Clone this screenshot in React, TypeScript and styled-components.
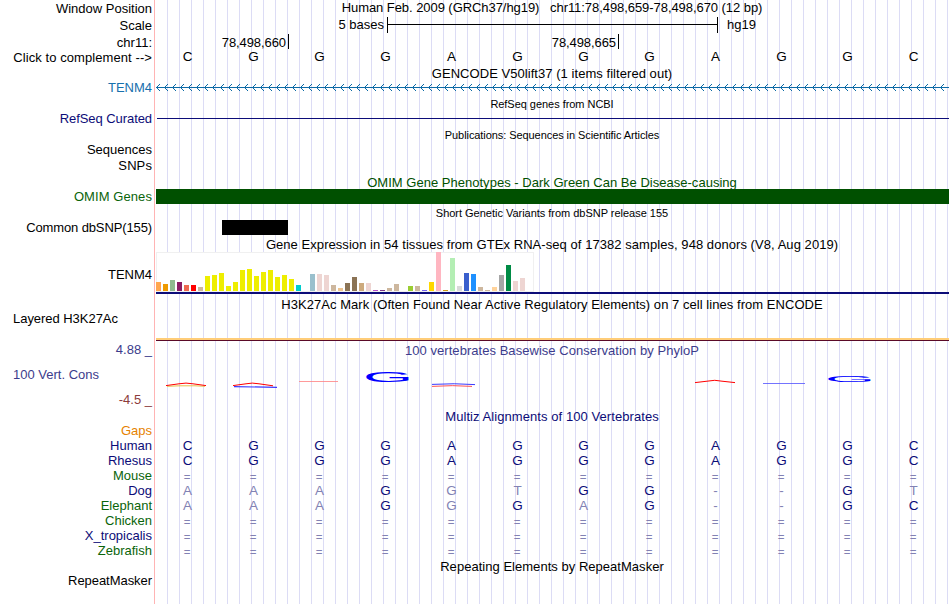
import React from 'react'
import styled, { createGlobalStyle } from 'styled-components';

interface IBar {
    height: number;
    color: string;
}

const NAVY = '#0c0c78';
const GREEN = '#0a640a';
const BLACK = '#000';

const sequence = 'CGGGAGGGAGGC'.split('');

const tissues: [number, string][] = [
    [9, '#ffa54f'], [7, '#ee9a00'], [11, '#8fbc8f'], [9, '#8b1c62'], [6, '#ee6a50'], [6, '#ff0000'],
    [4, '#cdb79e'], [15, '#eeee00'], [16, '#eeee00'], [18, '#eeee00'], [5, '#eeee00'], [9, '#eeee00'],
    [21, '#eeee00'], [22, '#eeee00'], [15, '#eeee00'], [19, '#eeee00'], [21, '#eeee00'], [14, '#eeee00'],
    [16, '#eeee00'], [12, '#eeee00'], [6, '#00cdcd'], [0, '#ee82ee'], [17, '#9ac0cd'], [17, '#eed5d2'],
    [16, '#eed5d2'], [6, '#cdb79e'], [3, '#eec591'], [8, '#8b7355'], [14, '#8b7355'], [8, '#cdaa7d'],
    [8, '#eed5d2'], [1, '#b452cd'], [1, '#7a378b'], [3, '#cdb79e'], [7, '#cdb79e'], [0, '#cdb79e'],
    [5, '#9acd32'], [5, '#cdb79e'], [1, '#7a67ee'], [9, '#ffd700'], [39, '#ffb6c1'], [1, '#cd9b1d'],
    [33, '#b4eeb4'], [5, '#d9d9d9'], [18, '#3a5fcd'], [17, '#1e90ff'], [4, '#cdb79e'], [1, '#cdb79e'],
    [4, '#ffd39b'], [16, '#a6a6a6'], [26, '#008b45'], [10, '#eed5d2'], [13, '#eed5d2'], [0, '#ff00ff'],
];

// lower case marks a base that differs from the human sequence
const species = [
    { name: 'Gaps', color: '#e68200', bases: '' },
    { name: 'Human', color: NAVY, bases: 'CGGGAGGGAGGC' },
    { name: 'Rhesus', color: NAVY, bases: 'CGGGAGGGAGGC' },
    { name: 'Mouse', color: GREEN, bases: '============' },
    { name: 'Dog', color: NAVY, bases: 'aaaGgtGG--Gt' },
    { name: 'Elephant', color: GREEN, bases: 'aaaGgGaG--GC' },
    { name: 'Chicken', color: GREEN, bases: '============' },
    { name: 'X_tropicalis', color: NAVY, bases: '============' },
    { name: 'Zebrafish', color: GREEN, bases: '============' },
];

const IntronLine = () => (
    <Drawing width="794" height="15" shapeRendering="crispEdges">
        <defs>
            <pattern id="strand" x="1" width="8" height="15" patternUnits="userSpaceOnUse">
                <path d="M0 7h1v1h-1zM1 6h1v1h-1zM2 5h1v1h-1zM3 4h1v1h-1zM1 8h1v1h-1zM2 9h1v1h-1zM3 10h1v1h-1z" fill="#0c6aa6" />
            </pattern>
        </defs>
        <rect x="1" y="7" width="793" height="1" fill="#0c6aa6" />
        <rect x="1" width="788" height="15" fill="url(#strand)" />
    </Drawing>
);

const ConservationLogo = () => (
    <Drawing width="794" height="48" fill="none">
        <path d="M12 28.3 L25 27.8 H40 L50 28.3" stroke="#e6c04a" />
        <path d="M11 27.6 L24 25.8 Q31 24.4 38 25.8 L51 27.6" stroke="#ff0000" />
        <path d="M79 28.6 L122 29.4" stroke="#3c3cff" strokeWidth="1.2" />
        <path d="M78 27.6 L91 25.8 Q97 24.4 104 25.8 L118 27.8" stroke="#ff0000" />
        <path d="M144 23.5H183" stroke="#ff8080" strokeWidth="0.8" />
        <LogoBase transform="translate(208 23.8) scale(4.6 1)">G</LogoBase>
        <path d="M277 26.4 Q300 25 320 26.6" stroke="#3c3cff" />
        <path d="M277 28.4 Q298 26.9 317 28.4" stroke="#ff4040" strokeWidth="0.9" />
        <path d="M540 24.6 L552 23.2 Q560 21.4 567 23.2 L580 24.6" stroke="#ff0000" />
        <path d="M608 25.5H650" stroke="#5050ff" strokeWidth="0.8" />
        <LogoBase transform="translate(670 23.9) scale(4.6 0.6)">G</LogoBase>
    </Drawing>
);

const Bases = ({ bases }: { bases: string[] }) => (
    <BaseGrid>
        {bases.map((base, i) => {
            if (base === '=') return <Unaligned key={i}>=</Unaligned>;
            return <Base key={i} $mismatch={/[a-z-]/.test(base)}>{base.toUpperCase()}</Base>;
        })}
    </BaseGrid>
);

const Bar = ({ height, color }: IBar) => <TissueBar style={{ height, background: color }} />;

const App = () => {
    return (
        <>
            <GlobalStyle />
            <Browser>
                <Row $height={17}>
                    <Label $top={1}>Window Position</Label>
                    <Track>
                        <Title $spacing={-0.06}>Human Feb. 2009 (GRCh37/hg19)&nbsp;&nbsp; chr11:78,498,659-78,498,670 (12 bp)</Title>
                    </Track>
                </Row>
                <Row $height={16}>
                    <Label $top={1}>Scale</Label>
                    <Track>
                        <Ruler>
                            <RulerText>5 bases</RulerText>
                            <ScaleBar />
                            <span>hg19</span>
                        </Ruler>
                    </Track>
                </Row>
                <Row $height={16}>
                    <Label $top={2}>chr11:</Label>
                    <Track>
                        <Positions>
                            <Position $width={134}>78,498,660</Position>
                            <Position $width={330}>78,498,665</Position>
                        </Positions>
                    </Track>
                </Row>
                <Row $height={17}>
                    <Label $top={1} $spacing={0.08}>Click to complement --&gt;</Label>
                    <Track>
                        <SequenceBases><Bases bases={sequence} /></SequenceBases>
                    </Track>
                </Row>

                <Title $spacing={0.05}>GENCODE V50lift37 (1 items filtered out)</Title>
                <Row $height={15}>
                    <Label $top={-1} $color="#1770ad">TENM4</Label>
                    <Track $top={-1}><IntronLine /></Track>
                </Row>
                <SmallTitle $spacing={-0.04}>RefSeq genes from NCBI</SmallTitle>
                <Row $height={16}>
                    <Label $color={NAVY} $spacing={-0.07}>RefSeq Curated</Label>
                    <Track><GeneLine /></Track>
                </Row>
                <SmallTitle $spacing={-0.07}>Publications: Sequences in Scientific Articles</SmallTitle>
                <Row $height={16}><Label>Sequences</Label></Row>
                <Row $height={17}><Label $spacing={0.1}>SNPs</Label></Row>

                <Title $color="#005000" $spacing={0.02}>OMIM Gene Phenotypes - Dark Green Can Be Disease-causing</Title>
                <Row $height={15}>
                    <Label $top={-1} $color={GREEN} $spacing={0.08}>OMIM Genes</Label>
                    <Track $top={-1}><Block $left={1} $width={793} $color="#005000" /></Track>
                </Row>
                <SmallTitle $spacing={-0.02}>Short Genetic Variants from dbSNP release 155</SmallTitle>
                <Row $height={17}>
                    <Label $spacing={-0.12}>Common dbSNP(155)</Label>
                    <Track><Block $left={67} $width={66} $color={BLACK} /></Track>
                </Row>

                <Title $spacing={0.055}>Gene Expression in 54 tissues from GTEx RNA-seq of 17382 samples, 948 donors (V8, Aug 2019)</Title>
                <Row $height={45}>
                    <Label $top={15}>TENM4</Label>
                    <Track>
                        <Expression>
                            {tissues.map(([height, color], i) => <Bar key={i} height={height} color={color} />)}
                        </Expression>
                        <ExpressionBase />
                    </Track>
                </Row>

                <Title $spacing={0.045}>H3K27Ac Mark (Often Found Near Active Regulatory Elements) on 7 cell lines from ENCODE</Title>
                <Row $height={31}>
                    <LeftLabel $top={-1} $spacing={-0.04}>Layered H3K27Ac</LeftLabel>
                    <Track $top={26}><HistoneLine /></Track>
                </Row>

                <Row $height={66}>
                    <ConsLabels>
                        <Label $color="#3c3c8c">4.88 _</Label>
                        <LeftLabel $color="#3c3c8c">100 Vert. Cons</LeftLabel>
                        <Label $color="#8c3c3c">-4.5 _</Label>
                    </ConsLabels>
                    <Track>
                        <Title $color="#3c3c8c" $spacing={0.04}>100 vertebrates Basewise Conservation by PhyloP</Title>
                        <ConservationLogo />
                    </Track>
                </Row>

                <Title $color={NAVY} $spacing={0.07}>Multiz Alignments of 100 Vertebrates</Title>
                {species.map(({ name, color, bases }) => (
                    <Row key={name} $height={15}>
                        <Label $top={-1} $color={color}>{name}</Label>
                        <Track $top={-1}><Bases bases={bases.split('')} /></Track>
                    </Row>
                ))}
                <Title $spacing={0.03}>Repeating Elements by RepeatMasker</Title>
                <Row $height={16}><Label $top={-1} $spacing={-0.05}>RepeatMasker</Label></Row>
            </Browser>
        </>
    );
}

const GlobalStyle = createGlobalStyle`
    body {
        margin: 0;
        background: #fff;
        overflow: hidden;
    }
`;

const Browser = styled("main")`
    box-sizing: border-box;
    display: flex;
    flex-direction: column;
    width: 949px;
    height: 604px;
    font-family: "Liberation Sans", Arial, sans-serif;
    font-size: 13px;
    line-height: 15px;
    color: #000;
    white-space: nowrap;
    background:
        linear-gradient(#ffb4b4, #ffb4b4) 154px 0 / 1px 100% no-repeat,
        repeating-linear-gradient(to right, #dcdcf5 0 1px, transparent 1px 12px) 167px 0 / 782px 100% no-repeat;
`;

const Row = styled("section")<{ $height: number }>`
    display: flex;
    flex: none;
    height: ${({ $height }) => $height}px;
`;

const Label = styled("div")<{ $top?: number; $color?: string; $spacing?: number }>`
    flex: none;
    width: 152px;
    height: 15px;
    margin-top: ${({ $top = 0 }) => $top}px;
    margin-right: 3px;
    text-align: right;
    letter-spacing: ${({ $spacing = 0 }) => $spacing}px;
    color: ${({ $color = BLACK }) => $color};
`;

const LeftLabel = styled(Label)`
    box-sizing: border-box;
    padding-left: 13px;
    text-align: left;
`;

const ConsLabels = styled("div")`
    display: flex;
    flex-direction: column;
    justify-content: space-between;
    height: 65px;
    margin-top: -1px;
`;

const Track = styled("div")<{ $top?: number }>`
    flex: none;
    width: 794px;
    margin-top: ${({ $top = 0 }) => $top}px;
`;

const Title = styled("h2")<{ $color?: string; $spacing?: number }>`
    flex: none;
    height: 15px;
    margin: 0 0 0 155px;
    font-size: 13px;
    font-weight: normal;
    text-align: center;
    letter-spacing: ${({ $spacing = 0 }) => $spacing}px;
    color: ${({ $color = BLACK }) => $color};

    ${Track} > & {
        margin-left: 0;
    }
`;

const SmallTitle = styled(Title)`
    font-size: 11px;
    line-height: 17px;
`;

const Ruler = styled("div")`
    display: flex;
`;

const RulerText = styled("span")`
    width: 229px;
    margin-right: 3px;
    text-align: right;
`;

const ScaleBar = styled("div")`
    box-sizing: border-box;
    width: 331px;
    height: 16px;
    margin-right: 9px;
    border: solid #000;
    border-width: 0 1px;
    background: linear-gradient(#000, #000) 0 7px / 100% 1px no-repeat;
`;

const Positions = styled("div")`
    display: flex;
    padding-top: 1px;
`;

const Position = styled("div")<{ $width: number }>`
    box-sizing: border-box;
    width: ${({ $width }) => $width}px;
    height: 15px;
    padding: 1px 2px 0 0;
    border-right: 1px solid #000;
    text-align: right;
    letter-spacing: -0.08px;
`;

const BaseGrid = styled("div")`
    display: grid;
    grid-template-columns: repeat(12, 66px);
    color: ${NAVY};
`;

const SequenceBases = styled("div")`
    ${BaseGrid} {
        color: #000;
    }
`;

const Base = styled("span")<{ $mismatch?: boolean }>`
    box-sizing: border-box;
    height: 15px;
    font-size: 13.5px;
    line-height: 15px;
    text-align: center;
    text-indent: -1px;
    ${({ $mismatch }) => $mismatch && 'color: #8282b4;'}
`;

const Unaligned = styled(Base)`
    padding-top: 3px;
    font-size: 11.5px;
    line-height: 12px;
    text-indent: -2px;
    color: #8282b4;
`;

const Drawing = styled("svg")`
    display: block;
    overflow: visible;
`;

const LogoBase = styled("text")`
    font-size: 14px;
    fill: #0000ff;
`;

const GeneLine = styled("div")`
    height: 1px;
    margin: 7px 0 0 2px;
    background: ${NAVY};
`;

const Block = styled("div")<{ $left: number; $width: number; $color: string }>`
    width: ${({ $width }) => $width}px;
    height: 15px;
    margin-left: ${({ $left }) => $left}px;
    background: ${({ $color }) => $color};
`;

const Expression = styled("div")`
    box-sizing: border-box;
    display: flex;
    align-items: flex-end;
    gap: 2px;
    width: 378px;
    height: 40px;
    margin-left: 1px;
    padding-bottom: 1px;
    background: #fff;
    box-shadow: inset 0 0 0 1px #f0f0f0;
`;

const TissueBar = styled("div")`
    flex: none;
    width: 5px;
`;

const ExpressionBase = styled("div")`
    height: 2px;
    margin-left: 1px;
    background: ${NAVY};
`;

const HistoneLine = styled("div")`
    height: 2px;
    margin-left: 1px;
    background: #ffcd78;
    border-bottom: 1px solid #5a0a28;
`;

export default App;
